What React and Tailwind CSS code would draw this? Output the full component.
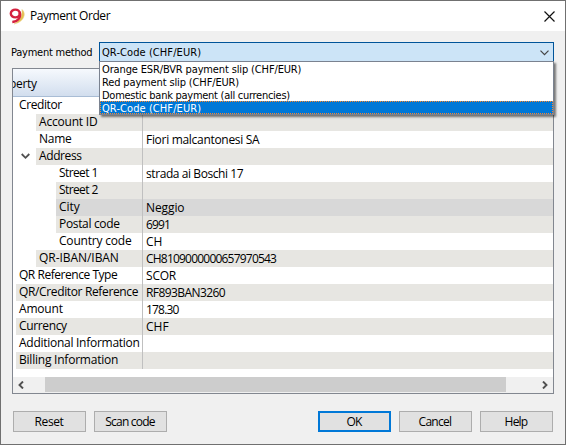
import React from 'react';

const rows = [
  ['Creditor', 0, '', 'tracking-[-0.4px]', ''],
  ['Account ID', 1, '', 'tracking-[-0.2px]', ''],
  ['Name', 1, 'Fiori malcantonesi SA', 'tracking-[-0.25px]', 'tracking-[-0.3px]'],
  ['Address', 1, '', 'tracking-[-0.4px]', ''],
  ['Street 1', 2, 'strada ai Boschi 17', 'tracking-[-0.6px]', 'tracking-[-0.42px]'],
  ['Street 2', 2, '', 'tracking-[-0.6px]', ''],
  ['City', 2, 'Neggio', 'tracking-[0px]', 'tracking-[-0.1px]'],
  ['Postal code', 2, '6991', 'tracking-[-0.33px]', 'tracking-[-0.9px]'],
  ['Country code', 2, 'CH', 'tracking-[-0.2px]', 'tracking-[0px]'],
  ['QR-IBAN/IBAN', 1, 'CH8109000000657970543', 'tracking-[-0.05px]', 'tracking-[-0.79px]'],
  ['QR Reference Type', 0, 'SCOR', 'tracking-[-0.46px]', 'tracking-[-0.2px]'],
  ['QR/Creditor Reference', 0, 'RF893BAN3260', 'tracking-[-0.36px]', 'tracking-[-0.57px]'],
  ['Amount', 0, '178.30', 'tracking-[-0.2px]', 'tracking-[-0.8px]'],
  ['Currency', 0, 'CHF', 'tracking-[-0.35px]', 'tracking-[0px]'],
  ['Additional Information', 0, '', 'tracking-[-0.27px]', ''],
  ['Billing Information', 0, '', 'tracking-[-0.22px]', ''],
];

const indents = ['ml-[3px]', 'ml-[23px]', 'ml-[43px]'];

const options = [
  ['Orange ESR/BVR payment slip (CHF/EUR)', 'tracking-[-0.14px]'],
  ['Red payment slip (CHF/EUR)', 'tracking-[-0.14px]'],
  ['Domestic bank payment (all currencies)', 'tracking-[-0.27px]'],
  ['QR-Code (CHF/EUR)', 'tracking-[0.08px]'],
];

function Row({ row, index }) {
  const [label, level, value, labelTracking, valueTracking] = row;
  const bg = label === 'City' ? 'bg-[#d8d8d8]' : index % 2 ? 'bg-[#e7e6e2]' : 'bg-white';
  return (
    <div className="flex h-[17px] leading-[16px]">
      <div className="flex w-[129px] shrink-0">
        <div className={`flex-1 pl-[3px] ${indents[level]} ${bg} ${labelTracking}`}>{label}</div>
      </div>
      <div className={`flex-1 border-l border-[#c0c0c0] pl-[3px] leading-[17px] ${bg} ${valueTracking}`}>{value}</div>
    </div>
  );
}

function Button({ children, primary, tracking }) {
  return (
    <button
      className={`h-[21px] w-[73px] bg-[#e1e1e1] pr-px text-center ${tracking} ${
        primary ? 'border-2 border-[#0078d7] leading-[17px]' : 'border border-[#adadad] leading-[19px]'
      }`}
    >
      {children}
    </button>
  );
}

export default function App() {
  return (
    <div className="relative flex h-[445px] w-[566px] flex-col overflow-hidden whitespace-nowrap border border-[#707070] bg-[#f0f0f0] font-['Open_Sans','Noto_Sans',sans-serif] text-[12px] text-black">
      <header className="flex h-[30px] shrink-0 items-center bg-white pl-2">
        <svg width="17" height="17" viewBox="0 0 17 17" fill="none">
          <path d="M13 1.500C17.500 5 15.500 14 5 16C10 13 13.500 9 13 1.500Z" fill="#e3c04e" stroke="#ecd08a" strokeWidth=".6" />
          <ellipse cx="6.300" cy="5.500" rx="4.500" ry="3.900" stroke="#d4213f" strokeWidth="2.400" />
          <path d="M10.600 4C12.300 9 9.500 13.500 3.300 14" stroke="#d4213f" strokeWidth="2.400" />
        </svg>
        <h1 className="ml-[4px] text-[12px] tracking-[-0.43px]">Payment Order</h1>
        <svg className="ml-auto mr-[10px]" width="11" height="11" viewBox="0 0 11 11">
          <path d="M.5.5l10 10M10.5.5l-10 10" stroke="#111" strokeWidth="1.2" />
        </svg>
      </header>

      <div className="mt-[11px] flex h-[20px] shrink-0 pl-[10px] font-['DejaVu_Sans_Condensed','DejaVu_Sans',sans-serif] text-[11px]">
        <label className="w-[88px] leading-[22px] tracking-[-0.24px]">Payment method</label>
        <div className="flex w-[455px] items-center border border-b-0 border-[#005499] bg-[#cce4f7] pl-[2px]">
          <span className="pt-px tracking-[0.08px]">QR-Code (CHF/EUR)</span>
          <svg className="ml-auto mr-1" width="9" height="6" viewBox="0 0 9 6">
            <path d="M.5.7l4 4 4-4" fill="none" stroke="#444" strokeWidth="1.2" />
          </svg>
        </div>
      </div>

      <main className="ml-[11px] mt-[6px] flex h-[326px] w-[542px] shrink-0 flex-col border border-[#828790] bg-white">
        <div className="h-[28px] shrink-0 overflow-hidden border-b border-[#a9bdd5] bg-gradient-to-b from-[#f6f9fd] to-[#d2deee] leading-[29px]">
          <span className="-ml-[4px] tracking-[-0.3px]">perty</span>
        </div>
        <div>
          {rows.map((row, i) => (
            <Row key={row[0]} row={row} index={i} />
          ))}
        </div>
        <div className="mt-auto flex h-[16px] items-center bg-[#f0f0f0] pl-[5px] pr-[5px]">
          <svg width="6" height="8" viewBox="0 0 6 8">
            <path d="M5 .5L1.5 4 5 7.5" fill="none" stroke="#505050" strokeWidth="1.9" />
          </svg>
          <div className="ml-[21px] h-[15px] w-[461px] self-start bg-[#cdcdcd]" />
          <svg className="ml-auto" width="6" height="8" viewBox="0 0 6 8">
            <path d="M1 .5L4.500 4 1 7.500" fill="none" stroke="#505050" strokeWidth="1.9" />
          </svg>
        </div>
      </main>

      <footer className="mt-[17px] flex gap-[8px] pl-[12px] pr-[12px]">
        <Button tracking="tracking-[-0.4px]">Reset</Button>
        <Button tracking="tracking-[-0.8px]">Scan code</Button>
        <div className="ml-auto flex gap-[8px]">
          <Button primary tracking="tracking-[-0.8px]">OK</Button>
          <Button tracking="tracking-[-0.7px]">Cancel</Button>
          <Button tracking="tracking-[-0.8px]">Help</Button>
        </div>
      </footer>

      <svg className="absolute left-[20px] top-[152px]" width="9" height="7" viewBox="0 0 9 7">
        <path d="M.7 1l3.800 3.800L8.300 1" fill="none" stroke="#505050" strokeWidth="1.8" />
      </svg>

      <ul className="absolute left-[98px] top-[60px] w-[455px] border border-[#7a8290] bg-white font-['DejaVu_Sans_Condensed','DejaVu_Sans',sans-serif] text-[11px] leading-[15px] shadow-[2px_2px_2px_rgba(0,0,0,0.5)]">
        {options.map(([label, tracking], i) => (
          <li
            key={label}
            className={`h-[13px] pl-[2px] ${tracking} ${
              i === 3 ? 'bg-[#0078d7] text-white outline-1 outline-dotted -outline-offset-1 outline-[#ff8728]' : ''
            }`}
          >
            {label}
          </li>
        ))}
      </ul>
    </div>
  );
}
